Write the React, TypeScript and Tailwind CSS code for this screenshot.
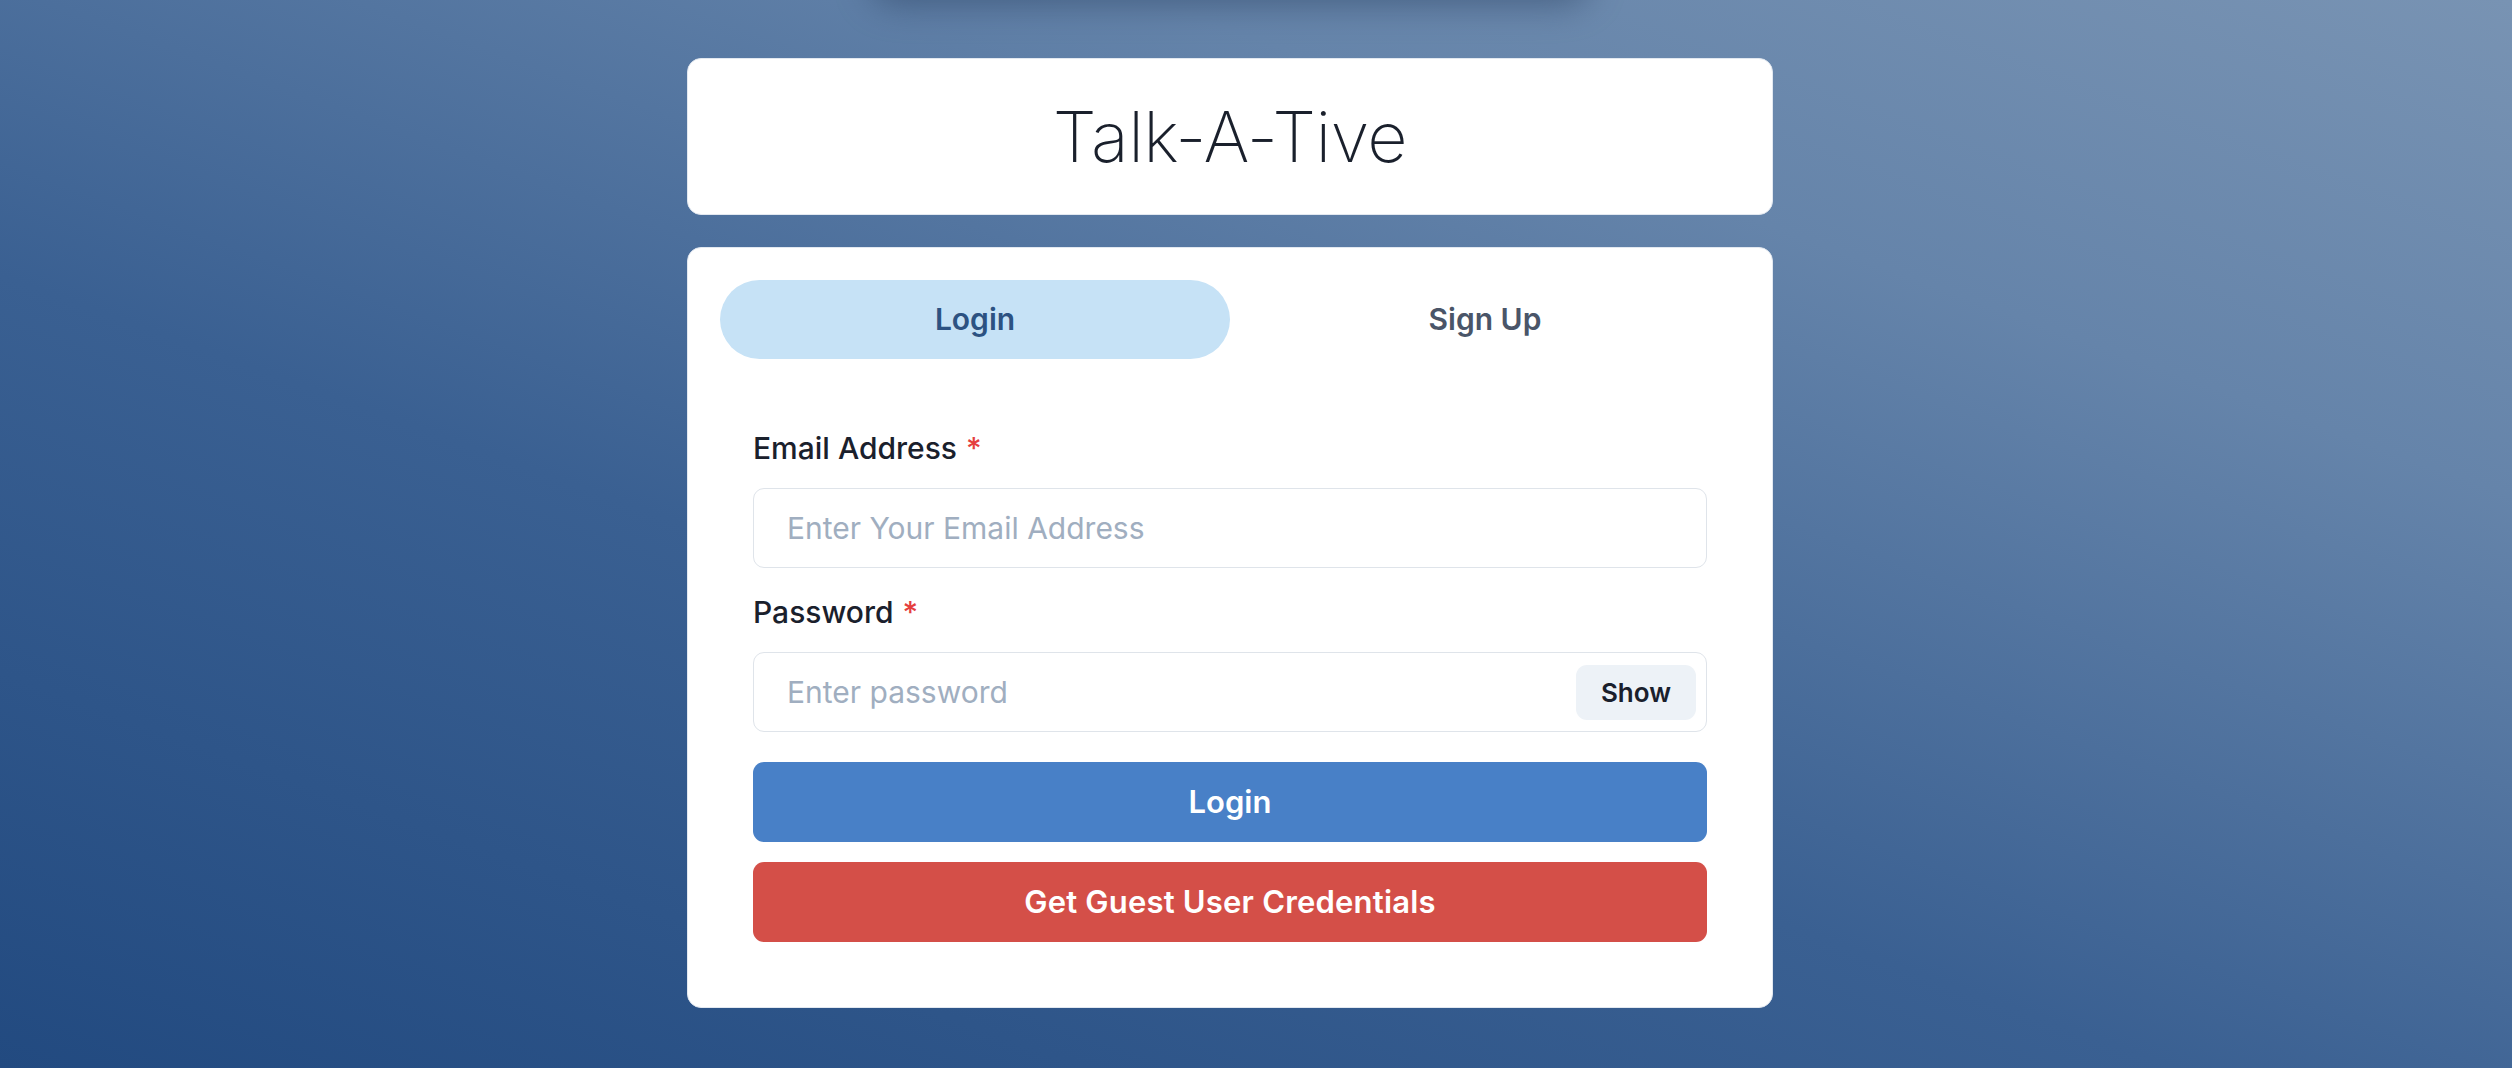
import { useState } from "react"

function Field({
  label,
  placeholder,
  type = "text",
  right,
}: {
  label: string
  placeholder: string
  type?: string
  right?: React.ReactNode
}) {
  return (
    <div>
      <label className="block h-[45px] text-[30px] leading-[45px] font-medium text-[#1a202c]">
        {label}
        <span className="ml-[9px] text-[#e53e3e]">*</span>
      </label>
      <div className="mt-[17px] flex h-[80px] items-center rounded-[11px] border border-[#dfe4ea] bg-white pr-[10px]">
        <input
          type={type}
          placeholder={placeholder}
          className="h-full min-w-0 flex-1 bg-transparent pl-[33px] text-[30px] text-[#1a202c] outline-none placeholder:text-[#a0aec0]"
        />
        {right}
      </div>
    </div>
  )
}

export default function App() {
  const [tab, setTab] = useState<"login" | "signup">("login")
  const [show, setShow] = useState(false)

  return (
    <div
      className="relative min-h-[1068px] w-full overflow-hidden bg-[linear-gradient(20deg,#224a80_0%,#3a6092_40%,#6584aa_75%,#7893b3_100%)]"
      style={{ fontFamily: "Inter, 'Noto Sans', sans-serif" }}
    >
      <div className="absolute -top-[46px] left-[870px] h-[50px] w-[720px] rounded-full bg-[#2e4566] opacity-60 blur-[18px]" />

      <div className="ml-[687px] flex w-[1086px] flex-col pt-[58px]">
        <div className="flex h-[157px] items-center justify-center rounded-[14px] border border-[#e2e8f0] bg-white">
          <h1 className="text-[70px] font-[250] tracking-[-0.5px] text-[#1a202c]">
            Talk-A-Tive
          </h1>
        </div>

        <div className="mt-[32px] rounded-[14px] border border-[#e2e8f0] bg-white p-[32px]">
          <div className="grid h-[79px] grid-cols-2">
            <button
              type="button"
              onClick={() => setTab("login")}
              className={
                tab === "login"
                  ? "rounded-full bg-[#c6e2f6] text-[30px] font-semibold text-[#2c5282]"
                  : "rounded-full text-[30px] font-semibold text-[#4a5568]"
              }
            >
              Login
            </button>
            <button
              type="button"
              onClick={() => setTab("signup")}
              className={
                tab === "signup"
                  ? "rounded-full bg-[#c6e2f6] text-[30px] font-semibold text-[#2c5282]"
                  : "rounded-full text-[30px] font-semibold text-[#4a5568]"
              }
            >
              Sign Up
            </button>
          </div>

          <div className="flex flex-col px-[33px] pt-[67px] pb-[33px]">
            <Field label="Email Address" placeholder="Enter Your Email Address" />
            <div className="mt-[22px]">
              <Field
                label="Password"
                placeholder="Enter password"
                type={show ? "text" : "password"}
                right={
                  <button
                    type="button"
                    onClick={() => setShow(!show)}
                    className="h-[55px] w-[120px] shrink-0 rounded-[11px] bg-[#edf2f7] text-[26px] font-semibold text-[#1a202c]"
                  >
                    {show ? "Hide" : "Show"}
                  </button>
                }
              />
            </div>

            <button
              type="button"
              className="mt-[30px] h-[80px] rounded-[11px] bg-[#4880c7] text-[31px] font-semibold text-white"
            >
              Login
            </button>
            <button
              type="button"
              className="mt-[20px] h-[80px] rounded-[11px] bg-[#d44f48] text-[31px] font-semibold tracking-[0.2px] text-white"
            >
              Get Guest User Credentials
            </button>
          </div>
        </div>
      </div>
    </div>
  )
}
